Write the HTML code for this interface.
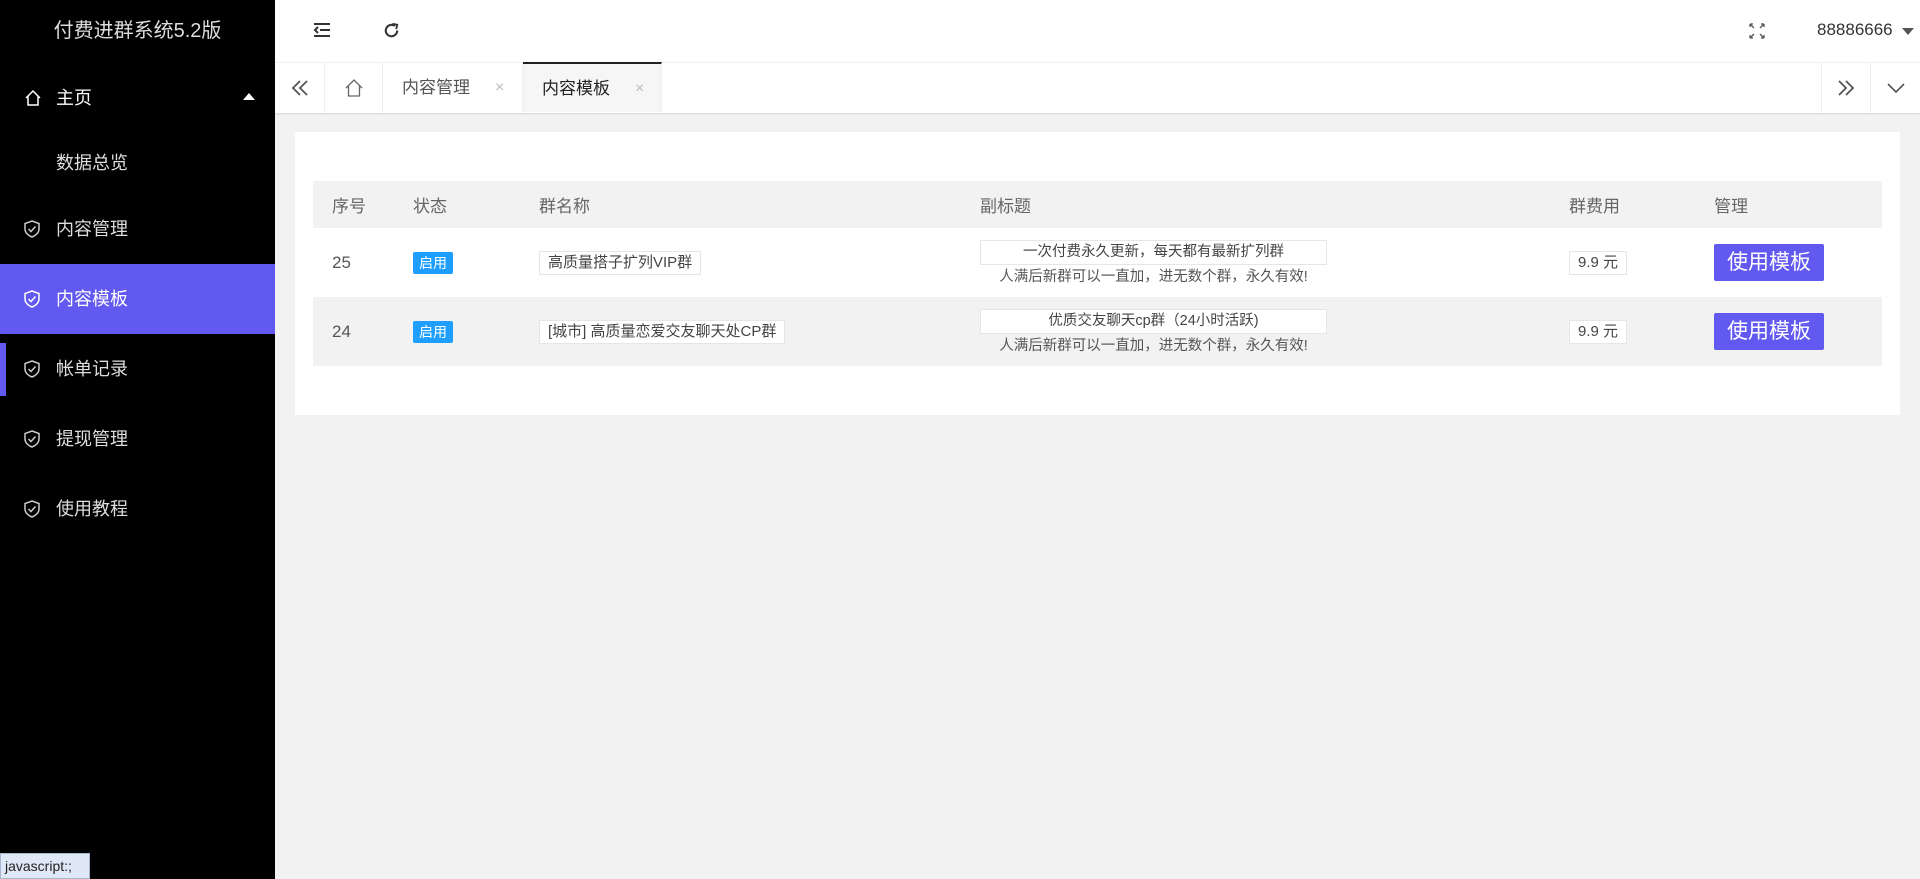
<!DOCTYPE html>
<html><head><meta charset="utf-8"><style>
*{margin:0;padding:0;box-sizing:border-box}
body{width:1920px;height:879px;overflow:hidden;background:#f2f2f2;font-family:"Liberation Sans","Noto Sans CJK SC",sans-serif;color:#333;position:relative}
.side{position:absolute;left:0;top:0;width:275px;height:879px;background:#000;color:#fff}
.side .title{height:62px;line-height:62px;text-align:center;font-size:20px;color:#ddd}
.item{position:absolute;left:0;width:275px;height:70px;line-height:70px;font-size:18px;color:#ddd;padding-left:56px}
.item svg{position:absolute;left:24px;top:26px}
.item.act{background:#6259f0;color:#fff}
.hdr{position:absolute;left:275px;top:0;right:0;height:62px;background:#fff}
.tabs{position:absolute;left:275px;top:62px;right:0;height:51px;background:#fff;border-top:1px solid #f0f0f0;box-shadow:0 1px 2px rgba(0,0,0,.12)}
.tab{position:absolute;top:0;height:50px;line-height:50px;font-size:17px;color:#555;border-right:1px solid #eee}
.card{position:absolute;left:295px;top:132px;width:1605px;height:283px;background:#fff;border-radius:2px}
table{position:absolute;left:18px;top:49px;width:1569px;border-collapse:collapse;font-size:17px;color:#555}
th{font-weight:normal;text-align:left;height:47px;background:#f2f2f2;color:#666}
td{height:69px;vertical-align:middle}
tr.g td{background:#f2f2f2}
.badge{display:inline-block;background:#1e9fff;color:#fff;font-size:14px;padding:0 6px;height:22px;line-height:22px;border-radius:2px}
.box{display:inline-block;border:1px solid #e6e6e6;background:#fff;font-size:15px;padding:0 8px;height:24px;line-height:22px;color:#444}
.sub{width:347px;text-align:center;font-size:14.5px;color:#555}
.sub .box{display:block;width:347px;height:25px;font-size:14.5px}
.btn{display:inline-block;background:#6259f0;color:#fff;font-size:21px;height:37px;line-height:37px;padding:0 13px;border-radius:2px}
.status{position:absolute;left:0;top:853px;width:90px;height:26px;background:#dfe8f6;border:1px solid #a7b6cc;font-size:14px;line-height:24px;padding-left:4px;color:#222}
</style></head><body>
<div class="side">
<div class="title">付费进群系统5.2版</div>
<div class="item" style="top:63px;color:#fff"><svg width="18" height="18" viewBox="0 0 18 18" fill="none" stroke="#fff" stroke-width="1.5"><path d="M2 9 L9 2 L16 9 M4 7 V16 H14 V7"/></svg>主页<span style="position:absolute;left:243px;top:30px;border:6px solid transparent;border-bottom:7px solid #fff;border-top:0"></span></div>
<div class="item" style="top:128px">数据总览</div>
<div class="item" style="top:194px"><svg width="16" height="18" viewBox="0 0 16 18" fill="none" stroke="#ccc" stroke-width="1.5"><path d="M8 1 L15 3.5 V9 C15 13 11 16 8 17 C5 16 1 13 1 9 V3.5 Z M4.5 9 L7 11.5 L11.5 6.5"/></svg>内容管理</div>
<div class="item act" style="top:264px"><svg width="16" height="18" viewBox="0 0 16 18" fill="none" stroke="#fff" stroke-width="1.5"><path d="M8 1 L15 3.5 V9 C15 13 11 16 8 17 C5 16 1 13 1 9 V3.5 Z M4.5 9 L7 11.5 L11.5 6.5"/></svg>内容模板</div>
<div class="item" style="top:334px"><span style="position:absolute;left:0;top:9px;width:6px;height:53px;background:#6259f0"></span><svg width="16" height="18" viewBox="0 0 16 18" fill="none" stroke="#ccc" stroke-width="1.5"><path d="M8 1 L15 3.5 V9 C15 13 11 16 8 17 C5 16 1 13 1 9 V3.5 Z M4.5 9 L7 11.5 L11.5 6.5"/></svg>帐单记录</div>
<div class="item" style="top:404px"><svg width="16" height="18" viewBox="0 0 16 18" fill="none" stroke="#ccc" stroke-width="1.5"><path d="M8 1 L15 3.5 V9 C15 13 11 16 8 17 C5 16 1 13 1 9 V3.5 Z M4.5 9 L7 11.5 L11.5 6.5"/></svg>提现管理</div>
<div class="item" style="top:474px"><svg width="16" height="18" viewBox="0 0 16 18" fill="none" stroke="#ccc" stroke-width="1.5"><path d="M8 1 L15 3.5 V9 C15 13 11 16 8 17 C5 16 1 13 1 9 V3.5 Z M4.5 9 L7 11.5 L11.5 6.5"/></svg>使用教程</div>
</div>
<div class="hdr">
<svg style="position:absolute;left:38px;top:22px" width="18" height="16" viewBox="0 0 18 16" fill="none" stroke="#333" stroke-width="2"><path d="M1 2H17 M7 8H17 M1 14H17 M5 5 L2 8 L5 11"/></svg>
<svg style="position:absolute;left:107px;top:21px" width="19" height="19" viewBox="0 0 20 20" fill="none" stroke="#333" stroke-width="2.2"><path d="M16 10 A6 6 0 1 1 13.5 5.2"/><path d="M11 3 L16 4 L15 8.5" stroke-width="2"/></svg>
<svg style="position:absolute;left:1474px;top:23px" width="16" height="16" viewBox="0 0 16 16" fill="none" stroke="#555" stroke-width="1.3"><path d="M1 1L5 5M1 1H4M1 1V4 M15 1L11 5M15 1H12M15 1V4 M1 15L5 11M1 15H4M1 15V12 M15 15L11 11M15 15H12M15 15V12"/></svg>
<div style="position:absolute;left:1542px;top:20px;font-size:17px;color:#333">88886666</div>
<span style="position:absolute;left:1627px;top:28px;border:6px solid transparent;border-top:7px solid #555;border-bottom:0"></span>
</div>
<div class="tabs">
<div class="tab" style="left:0;width:50px;text-align:center"><svg style="margin-top:17px" width="18" height="16" viewBox="0 0 18 16" fill="none" stroke="#555" stroke-width="1.8"><path d="M9 1 L2 8 L9 15 M16 1 L9 8 L16 15"/></svg></div>
<div class="tab" style="left:50px;width:58px;text-align:center"><svg style="margin-top:15px" width="20" height="20" viewBox="0 0 20 20" fill="none" stroke="#666" stroke-width="1.3"><path d="M2 10 L10 2 L18 10 M4.5 8 V18 H15.5 V8"/></svg></div>
<div class="tab" style="left:108px;width:140px;padding-left:19px">内容管理<span style="position:absolute;left:112px;color:#bbb;font-size:16px">×</span></div>
<div class="tab" style="left:248px;width:139px;padding-left:19px;background:#f6f6f6;color:#222;border-top:2px solid #222;top:-1px">内容模板<span style="position:absolute;left:112px;color:#bbb;font-size:16px">×</span></div>
<div class="tab" style="left:1546px;width:50px;border-left:1px solid #eee;text-align:center"><svg style="margin-top:17px" width="18" height="16" viewBox="0 0 18 16" fill="none" stroke="#555" stroke-width="1.8"><path d="M2 1 L9 8 L2 15 M9 1 L16 8 L9 15"/></svg></div>
<div class="tab" style="left:1596px;width:50px;border:none;text-align:center"><svg style="margin-top:20px" width="18" height="10" viewBox="0 0 18 10" fill="none" stroke="#555" stroke-width="1.6"><path d="M1 1 L9 9 L17 1"/></svg></div>
</div>
<div class="card">
<table>
<tr><th style="width:100px;padding-left:19px">序号</th><th style="width:126px">状态</th><th style="width:441px">群名称</th><th style="width:589px">副标题</th><th style="width:145px">群费用</th><th>管理</th></tr>
<tr><td style="padding-left:19px">25</td><td><span class="badge">启用</span></td><td><span class="box">高质量搭子扩列VIP群</span></td><td><div class="sub"><span class="box">一次付费永久更新，每天都有最新扩列群</span>人满后新群可以一直加，进无数个群，永久有效!</div></td><td><span class="box">9.9 元</span></td><td><span class="btn">使用模板</span></td></tr>
<tr class="g"><td style="padding-left:19px">24</td><td><span class="badge">启用</span></td><td><span class="box">[城市] 高质量恋爱交友聊天处CP群</span></td><td><div class="sub"><span class="box">优质交友聊天cp群（24小时活跃)</span>人满后新群可以一直加，进无数个群，永久有效!</div></td><td><span class="box">9.9 元</span></td><td><span class="btn">使用模板</span></td></tr>
</table>
</div>
<div class="status">javascript:;</div>
</body></html>
